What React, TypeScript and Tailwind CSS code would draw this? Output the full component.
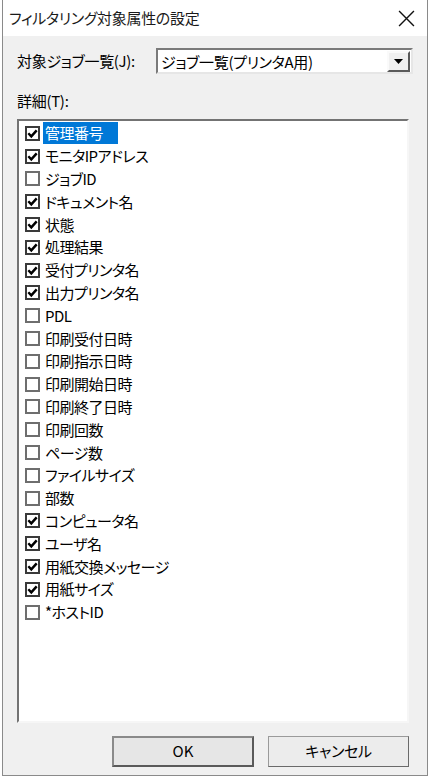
const font = "font-['Noto_Sans_CJK_JP','Noto_Sans',sans-serif] [font-feature-settings:'palt']";

const items: { label: string; checked: boolean; selected?: boolean }[] = [
  { label: "管理番号", checked: true, selected: true },
  { label: "モニタIPアドレス", checked: true },
  { label: "ジョブID", checked: false },
  { label: "ドキュメント名", checked: true },
  { label: "状態", checked: true },
  { label: "処理結果", checked: true },
  { label: "受付プリンタ名", checked: true },
  { label: "出力プリンタ名", checked: true },
  { label: "PDL", checked: false },
  { label: "印刷受付日時", checked: false },
  { label: "印刷指示日時", checked: false },
  { label: "印刷開始日時", checked: false },
  { label: "印刷終了日時", checked: false },
  { label: "印刷回数", checked: false },
  { label: "ページ数", checked: false },
  { label: "ファイルサイズ", checked: false },
  { label: "部数", checked: false },
  { label: "コンピュータ名", checked: true },
  { label: "ユーザ名", checked: true },
  { label: "用紙交換メッセージ", checked: true },
  { label: "用紙サイズ", checked: true },
  { label: "*ホストID", checked: false },
];

function CheckBox({ checked }: { checked: boolean }) {
  return (
    <div
      className={`w-[15px] h-[15px] shrink-0 bg-white border-2 flex items-center justify-center ${
        checked ? "border-[#3a3a3a]" : "border-[#6e6e6e]"
      }`}
    >
      {checked && (
        <svg width="11" height="11" viewBox="0 0 10 10">
          <path d="M1.2 4.8 L3.9 7.6 L8.8 2.2" fill="none" stroke="#000" strokeWidth="2.2" />
        </svg>
      )}
    </div>
  );
}

export default function App() {
  return (
    <div className={`w-[431px] h-[778px] bg-white ${font} text-black`}>
      <div className="ml-[2px] w-[426px] h-[776px] flex flex-col border-x border-b border-[#8a8a8a]">
        {/* title bar */}
        <div className="h-[36px] bg-white flex items-center justify-between pl-[6px] pr-[12px]">
          <span className="text-[15px] text-[#1a1a1a] tracking-[-0.3px]">フィルタリング対象属性の設定</span>
          <svg width="17" height="17" viewBox="0 0 16 16">
            <path d="M1 1 L15 15 M15 1 L1 15" stroke="#111" strokeWidth="1.3" />
          </svg>
        </div>

        {/* body */}
        <div className="flex-1 bg-[#f0f0f0] pl-[14px] pr-[14px] flex flex-col">
          <div className="mt-[12px] flex items-center h-[26px]">
            <span className="w-[139px] text-[15px] tracking-[-0.3px]">対象ジョブ一覧(J):</span>
            <div className="flex-1 h-[26px] bg-white border-2 border-t-[#7a7a7a] border-l-[#7a7a7a] border-r-[#e6e6e6] border-b-[#e6e6e6] flex items-center pl-[3px] pr-[1px]">
              <span className="flex-1 text-[15px] leading-none tracking-[-0.3px]">ジョブ一覧(プリンタA用)</span>
              <div className="w-[23px] h-[21px] bg-[#f0f0f0] border-2 border-t-[#fafafa] border-l-[#fafafa] border-r-[#5a5a5a] border-b-[#5a5a5a] flex items-center justify-center">
                <svg width="9" height="5" viewBox="0 0 9 5">
                  <path d="M0 0 H9 L4.5 5 Z" fill="#000" />
                </svg>
              </div>
            </div>
          </div>

          <div className="mt-[16px] text-[15px] leading-[22px] tracking-[-0.3px]">詳細(T):</div>

          <div className="mt-[7px] mr-[4px] h-[604px] bg-white border-2 border-t-[#737373] border-l-[#737373] border-r-[#f6f6f6] border-b-[#f6f6f6] pl-[6px] pt-[1px]">
            {items.map((it) => (
              <div key={it.label} className="h-[22.8px] flex items-center">
                <CheckBox checked={it.checked} />
                <span
                  className={`ml-[3px] pl-[2px] text-[15px] leading-[22px] tracking-[-0.5px] ${
                    it.selected ? "bg-[#0078d7] text-white w-[75px]" : ""
                  }`}
                >
                  {it.label}
                </span>
              </div>
            ))}
          </div>

          <div className="mt-[13px] flex justify-end gap-[14px] mr-[4px]">
            <button className="w-[142px] h-[31px] bg-[#e6e6e6] border-2 border-[#5a5a5a] border-t-[#8a8a8a] border-l-[#8a8a8a] text-[15px]">
              OK
            </button>
            <button className="w-[141px] h-[31px] bg-[#ececec] border border-[#9a9a9a] border-r-[#6a6a6a] border-b-[#6a6a6a] text-[15px] tracking-[-0.3px]">
              キャンセル
            </button>
          </div>
        </div>
      </div>
    </div>
  );
}
